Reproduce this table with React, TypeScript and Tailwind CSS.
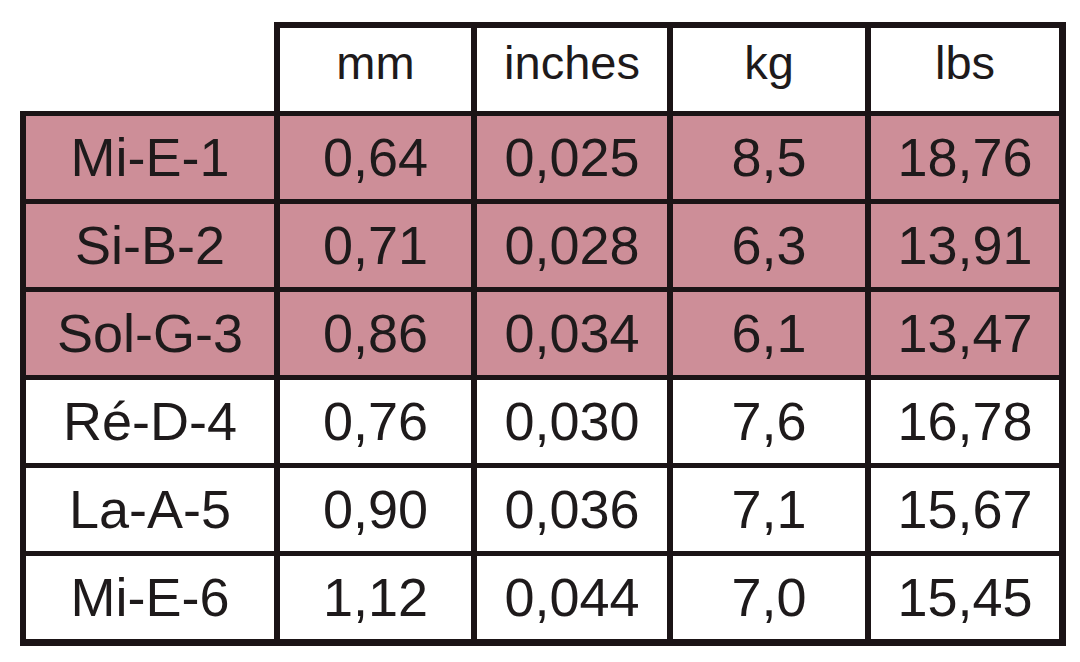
const header = ['mm', 'inches', 'kg', 'lbs'];

const rows = [
  { name: 'Mi-E-1', values: ['0,64', '0,025', '8,5', '18,76'], pink: true },
  { name: 'Si-B-2', values: ['0,71', '0,028', '6,3', '13,91'], pink: true },
  { name: 'Sol-G-3', values: ['0,86', '0,034', '6,1', '13,47'], pink: true },
  { name: 'Ré-D-4', values: ['0,76', '0,030', '7,6', '16,78'], pink: false },
  { name: 'La-A-5', values: ['0,90', '0,036', '7,1', '15,67'], pink: false },
  { name: 'Mi-E-6', values: ['1,12', '0,044', '7,0', '15,45'], pink: false },
];

export default function App() {
  return (
    <div
      className="h-[662px] w-[1080px] bg-white pl-[20px] pt-[22px] text-[#1e1a1b]"
      style={{ fontFamily: '"Liberation Sans", Arial, sans-serif' }}>
      <div className="grid w-[1046px] grid-cols-[260px_197px_196px_198px_195px]">
        {/* empty corner, its right edge is the left edge of the header */}
        <div className="border-b-[5px] border-r-[6px] border-[#1b1416]" />
        {header.map((h, i) => (
          <div
            key={h}
            className={
              'flex h-[94px] items-center justify-center border-t-[6px] border-b-[5px] border-[#1b1416] bg-white pb-[12px] text-[47px] ' +
              (i === 3 ? 'border-r-[7px]' : 'border-r-[6px]')
            }>
            {h}
          </div>
        ))}

        {rows.map((row, r) => {
          const last = r === rows.length - 1;
          const bg = row.pink ? 'bg-[#cd8e98]' : 'bg-white';
          const bottom = last ? 'h-[90px] border-b-[7px]' : 'h-[88px] border-b-[5px]';
          return [
            <div
              key={row.name}
              className={`flex items-center justify-center border-l-[6px] border-r-[6px] border-[#1b1416] text-[54px] ${bg} ${bottom}`}>
              {row.name}
            </div>,
            ...row.values.map((v, i) => (
              <div
                key={row.name + i}
                className={
                  `flex items-center justify-center border-[#1b1416] text-[54px] ${bg} ${bottom} ` +
                  (i === 3 ? 'border-r-[7px]' : 'border-r-[6px]')
                }>
                {v}
              </div>
            )),
          ];
        })}
      </div>
    </div>
  );
}
